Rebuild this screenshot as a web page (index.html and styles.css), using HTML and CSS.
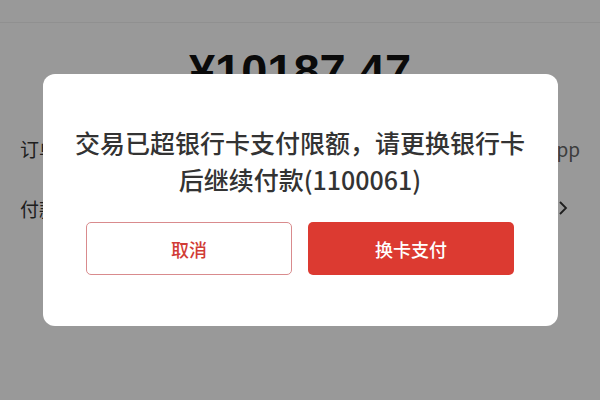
FILE: index.html
```html
<!DOCTYPE html>
<html lang="zh-CN">
<head>
<meta charset="utf-8">
<link rel="stylesheet" href="styles.css">
</head>
<body>
<div class="page">
  <div class="topbar"></div>
  <div class="amount">¥10187.47</div>
  <div class="row">
    <span class="label">订单信息</span>
    <span class="value">某某App</span>
  </div>
  <div class="row">
    <span class="label">付款方式</span>
    <span class="value chevron"><svg width="10" height="16" viewBox="0 0 10 16"><path d="M2 2 L8 8 L2 14" fill="none" stroke="#333" stroke-width="1.8"/></svg></span>
  </div>
</div>
<div class="mask">
  <div class="dialog">
    <div class="title">交易已超银行卡支付限额，请更换银行卡<br>后继续付款(1100061)</div>
    <div class="actions">
      <button class="btn btn-cancel">取消</button>
      <button class="btn btn-ok">换卡支付</button>
    </div>
  </div>
</div>
</body>
</html>
```
FILE: styles.css
```css
html, body {
  margin: 0;
  padding: 0;
  width: 600px;
  height: 400px;
  overflow: hidden;
  background: #fff;
  font-family: "Noto Sans CJK SC", "Liberation Sans", sans-serif;
}
.page {
  height: 400px;
  display: flex;
  flex-direction: column;
  color: #333;
}
.topbar {
  height: 22px;
  border-bottom: 1px solid #f0f0f0;
}
.amount {
  height: 95px;
  display: flex;
  align-items: flex-start;
  justify-content: center;
  padding-top: 20px;
  box-sizing: border-box;
  font-family: "Liberation Sans", sans-serif;
  font-weight: bold;
  font-size: 47px;
  color: #111;
}
.row {
  height: 60px;
  display: flex;
  align-items: center;
  justify-content: space-between;
  padding: 0 20px;
  font-size: 19px;
}
.value { color: #666; }
.chevron { display: flex; padding-right: 12px; }
.mask {
  position: fixed;
  inset: 0;
  background: rgba(0, 0, 0, 0.4);
  display: flex;
  align-items: flex-start;
  justify-content: center;
}
.dialog {
  margin-top: 74px;
  width: 515px;
  height: 252px;
  box-sizing: border-box;
  background: #fff;
  border-radius: 12px;
  padding-top: 50px;
  display: flex;
  flex-direction: column;
  align-items: center;
}
.title {
  font-size: 25px;
  line-height: 37px;
  font-weight: 500;
  color: #333;
  text-align: center;
  white-space: nowrap;
}
.actions {
  margin-top: 24px;
  display: flex;
  gap: 16px;
}
.btn {
  width: 206px;
  height: 53px;
  border-radius: 5px;
  font-family: "Noto Sans CJK SC", sans-serif;
  font-size: 18px;
  font-weight: 500;
  box-sizing: border-box;
  cursor: pointer;
}
.btn-cancel {
  background: #fff;
  border: 1.5px solid #d98b8d;
  color: #d13c36;
}
.btn-ok {
  background: #dc3a31;
  border: none;
  color: #fff;
}
```
